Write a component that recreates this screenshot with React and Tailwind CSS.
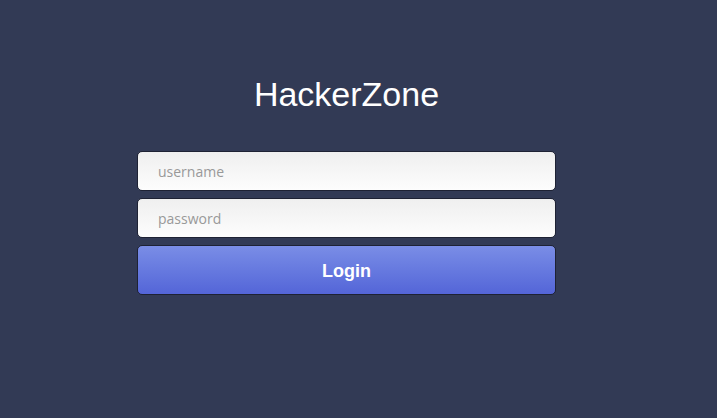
import React from 'react'

export default function App() {
  return (
    <div className="w-[717px] h-[418px] bg-[#323a55] overflow-hidden" style={{ fontFamily: '"Liberation Sans", Arial, sans-serif' }}>
      <div className="w-[419px] ml-[137px] pt-[72px] flex flex-col">
        <h1 className="text-center text-white text-[34px] leading-[44px] font-normal">HackerZone</h1>
        <form className="mt-[35px] flex flex-col gap-[7px]" onSubmit={(e) => e.preventDefault()}>
          <input
            type="text"
            placeholder="username"
            className="h-[40px] w-full rounded-[5px] border border-[#1e2234] bg-gradient-to-b from-[#efefef] to-[#fdfdfd] px-[20px] text-[14px] text-[#333] placeholder:text-[#999] outline-none"
            style={{ fontFamily: '"Open Sans", sans-serif' }}
          />
          <input
            type="password"
            placeholder="password"
            className="h-[40px] w-full rounded-[5px] border border-[#1e2234] bg-gradient-to-b from-[#efefef] to-[#fdfdfd] px-[20px] text-[14px] text-[#333] placeholder:text-[#999] outline-none"
            style={{ fontFamily: '"Open Sans", sans-serif' }}
          />
          <button
            type="submit"
            className="h-[50px] w-full rounded-[5px] border border-[#1e2234] bg-gradient-to-b from-[#7a8de6] to-[#5465d8] pt-[3px] text-white font-bold text-[18px]"
          >
            Login
          </button>
        </form>
      </div>
    </div>
  )
}
